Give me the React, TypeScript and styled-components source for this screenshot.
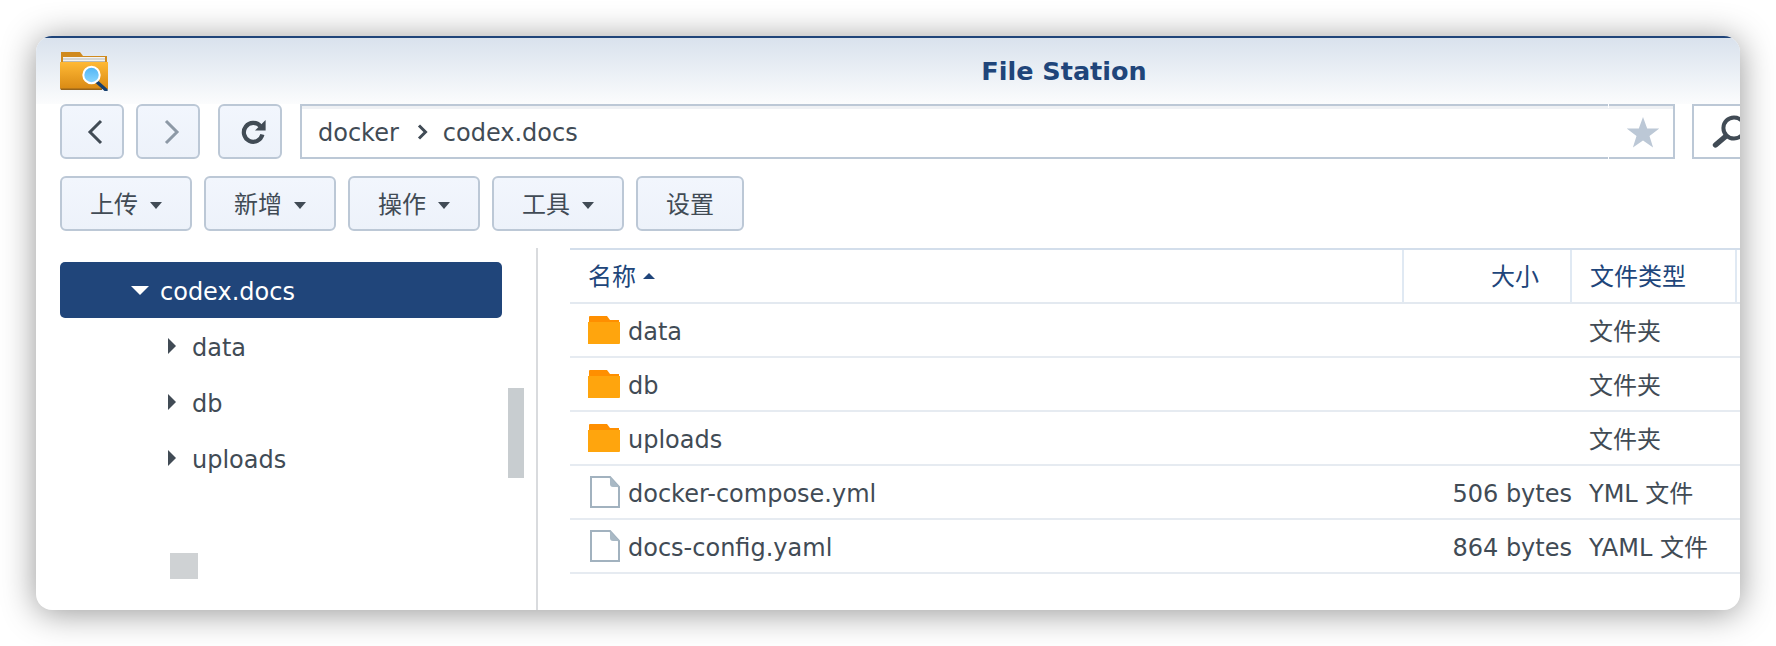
import React from 'react'
import styled, { createGlobalStyle } from 'styled-components'

const FONT = `"DejaVu Sans", "Noto Sans CJK SC", sans-serif`
const INK = '#414b55'
const NAVY = '#20457a'
const EDGE = '#bcc8d6'

const Global = createGlobalStyle`
    html, body {
        margin: 0;
        background: #ffffff;
        overflow: hidden;
    }
    body {
        font-family: ${FONT};
        color: ${INK};
    }
`
const Page = styled.div`
    width: 1776px;
    height: 646px;
    padding: 36px 36px 0;
    box-sizing: border-box;
`
const Window = styled.div`
    width: 1704px;
    height: 574px;
    border-radius: 16px;
    overflow: hidden;
    background: #ffffff;
    box-shadow: 0 3px 34px rgba(0, 0, 0, 0.42);
`
const Inner = styled.div`
    width: 2056px;
    height: 100%;
    display: flex;
    flex-direction: column;
`
const TitleBar = styled.header`
    border-top: 2px solid #1f4479;
    background: linear-gradient(#d9e2ed, #fbfcfd);
    display: grid;
    grid-template-columns: 1fr auto 1fr;
    padding: 13px 24px 0;
    height: 53px;
`
const Title = styled.h1`
    margin: 4px 0 0;
    font-size: 25.5px;
    line-height: 32px;
    font-weight: 700;
    color: #20457a;
`
const Toolbar = styled.div<{ $top?: number }>`
    display: flex;
    height: 55px;
    padding-left: 24px;
    margin-top: ${p => p.$top ?? 0}px;
    gap: 12px;
`
const ToolButton = styled.button<{ $after?: number; $w?: number; $shift?: number }>`
    flex: none;
    height: 55px;
    width: ${p => (p.$w ? `${p.$w}px` : 'auto')};
    margin-right: ${p => p.$after ?? 0}px;
    padding: 0 0 0 ${p => p.$shift ?? 0}px;
    border: 2px solid ${EDGE};
    border-radius: 6px;
    background: linear-gradient(#f2f6fd, #edf2fa);
    display: flex;
    align-items: center;
    justify-content: center;
    gap: 12px;
    font: 400 24px ${FONT};
    color: ${INK};
`
const ButtonLabel = styled.span`
    padding-bottom: 3px;
`
const Caret = styled.span<{ $color?: string }>`
    width: 0;
    height: 0;
    border-left: 6px solid transparent;
    border-right: 6px solid transparent;
    border-top: 7px solid ${p => p.$color ?? INK};
    margin-top: 4px;
`
const Address = styled.div`
    flex: none;
    width: 1375px;
    height: 55px;
    margin-right: 5px;
    box-sizing: border-box;
    border: 2px solid ${EDGE};
    box-shadow: inset 0 3px 0 #eff1f4;
    background: #ffffff;
    display: flex;
    align-items: center;
    padding-left: 16px;
    font-size: 24px;
    position: relative;
`
const Crumb = styled.span`
    line-height: 32px;
    padding-top: 3px;
`
const CrumbArrow = styled.svg`
    margin: 0 14px 0 18px;
    flex: none;
`
const StarSlot = styled.div`
    margin-left: auto;
    width: 64px;
    height: 100%;
    display: flex;
    align-items: center;
    justify-content: center;
    padding-left: 4px;
    box-sizing: border-box;
    &::before {
        content: '';
        position: absolute;
        top: -2px;
        bottom: -2px;
        right: 64px;
        width: 1px;
        background: linear-gradient(#fff 0 4px, transparent 4px calc(100% - 4px), #fff calc(100% - 4px));
    }
`
const SearchBox = styled.div`
    flex: none;
    width: 90px;
    height: 55px;
    box-sizing: border-box;
    border: 2px solid ${EDGE};
    display: flex;
    align-items: center;
    padding-left: 16px;
`
const Body = styled.div`
    flex: 1;
    display: flex;
    margin-top: 17px;
    min-height: 0;
`
const Sidebar = styled.aside`
    flex: none;
    width: 502px;
    box-sizing: border-box;
    padding: 14px 0 0 24px;
    border-right: 2px solid #d9dbde;
    position: relative;
`
const TreeRow = styled.div<{ $active?: boolean; $indent: number }>`
    width: 442px;
    height: 56px;
    box-sizing: border-box;
    padding-left: ${p => p.$indent}px;
    display: flex;
    align-items: center;
    gap: ${p => (p.$active ? 11 : 16)}px;
    font-size: 24px;
    border-radius: 5px;
    background: ${p => (p.$active ? NAVY : 'transparent')};
    color: ${p => (p.$active ? '#ffffff' : INK)};
`
const TreeLabel = styled.span`
    padding-top: 3px;
`
const ArrowRight = styled.span`
    width: 0;
    height: 0;
    border-top: 8px solid transparent;
    border-bottom: 8px solid transparent;
    border-left: 8px solid ${INK};
`
const ArrowDown = styled.span`
    width: 0;
    height: 0;
    border-left: 9px solid transparent;
    border-right: 9px solid transparent;
    border-top: 9px solid #ffffff;
`
const ScrollThumb = styled.div`
    position: absolute;
    left: 472px;
    top: 140px;
    width: 16px;
    height: 90px;
    background: #c8cdd0;
`
const StraySquare = styled.div`
    width: 28px;
    height: 26px;
    margin: 67px 0 0 110px;
    background: #cfd2d4;
`
const Main = styled.main`
    flex: 1;
    padding-left: 32px;
`
const Table = styled.div`
    border-top: 2px solid #d3deeb;
`
const Row = styled.div<{ $head?: boolean }>`
    display: grid;
    grid-template-columns: 834px 168px 165px 1fr;
    height: 54px;
    box-sizing: border-box;
    border-bottom: 2px solid ${p => (p.$head ? '#e3e9f0' : '#e6ebf1')};
    font-size: 24px;
    color: ${p => (p.$head ? '#20457a' : INK)};
`
const HeadCell = styled.div<{ $right?: boolean }>`
    display: flex;
    align-items: center;
    gap: 7px;
    padding: ${p => (p.$right ? '0 31px 3px 0' : '0 0 3px 18px')};
    justify-content: ${p => (p.$right ? 'flex-end' : 'flex-start')};
    border-right: 2px solid #e0e9f3;
    box-sizing: border-box;
`
const SortUp = styled.span`
    width: 0;
    height: 0;
    border-left: 6px solid transparent;
    border-right: 6px solid transparent;
    border-bottom: 6px solid #20457a;
    margin-top: 2px;
`
const NameCell = styled.div`
    display: flex;
    align-items: center;
    padding-left: 18px;
    gap: 8px;
`
const FileName = styled.span`
    padding-top: 4px;
`
const SizeCell = styled.div`
    display: flex;
    align-items: center;
    justify-content: flex-end;
    padding-top: 3px;
`
const TypeCell = styled.div`
    display: flex;
    align-items: center;
    padding: 0 0 2px 17px;
`
const IconSlot = styled.span`
    width: 32px;
    display: flex;
    justify-content: flex-end;
`

const AppIcon = () => (
    <svg width="48" height="40" viewBox="0 0 48 40">
        <defs>
            <linearGradient id="fold" x1="0" y1="0" x2="0" y2="1">
                <stop offset="0" stopColor="#ffb935" />
                <stop offset="1" stopColor="#d98a14" />
            </linearGradient>
            <linearGradient id="lens" x1="0" y1="0" x2="0" y2="1">
                <stop offset="0" stopColor="#4fb4f4" />
                <stop offset="1" stopColor="#8bd7ff" />
            </linearGradient>
        </defs>
        <path d="M1 1h19l3 4h24v10H1z" fill="#d08a1e" />
        <path d="M3 6h42v6H3z" fill="#f4f4f2" />
        <path d="M3 8h42M3 10.5h42" stroke="#a9a9a4" strokeWidth="0.8" />
        <path d="M0 11h48v27H1a1 1 0 0 1-1-1z" fill="url(#fold)" />
        <path d="M0 37.5h42v1.5H1z" fill="#96651d" />
        <path d="M37 31l9 8" stroke="#16406f" strokeWidth="3.4" strokeLinecap="round" />
        <circle cx="31.5" cy="24" r="8.2" fill="url(#lens)" stroke="#ffffff" strokeWidth="2" />
    </svg>
)

const Chevron = ({ dir, color }: { dir: 'left' | 'right'; color: string }) => (
    <svg width="18" height="26" viewBox="0 0 18 26">
        <path
            d={dir === 'left' ? 'M15 2L4 13l11 11' : 'M3 2l11 11L3 24'}
            fill="none"
            stroke={color}
            strokeWidth="3"
        />
    </svg>
)

const RefreshIcon = () => (
    <svg width="26" height="26" viewBox="0 0 26 26">
        <path
            d="M19.4 7.2A9.4 9.4 0 1 0 21.4 15.6"
            fill="none"
            stroke={INK}
            strokeWidth="4.2"
        />
        <path d="M24.6 1V11.6H14z" fill={INK} />
    </svg>
)

const StarIcon = () => (
    <svg width="34" height="32" viewBox="0 0 34 32">
        <path d="M17 1l4.2 11.6H33.3l-9.8 7.3 3.6 11.6L17 24.6 6.9 31.5l3.6-11.6L.7 12.6h12.1z" fill={EDGE} />
    </svg>
)

const SearchIcon = () => (
    <svg width="44" height="36" viewBox="0 0 44 36">
        <circle cx="24" cy="14" r="10.6" fill="none" stroke={INK} strokeWidth="4" />
        <path d="M15.5 22.5L5.5 31" stroke={INK} strokeWidth="5.4" strokeLinecap="round" />
    </svg>
)

const FolderIcon = () => (
    <svg width="32" height="28" viewBox="0 0 32 28">
        <path d="M2 0h17l3 4h9v4H1V1a1 1 0 0 1 1-1z" fill="#ff8f00" />
        <path d="M0 6h32v21a1 1 0 0 1-1 1H0z" fill="#ffa50d" />
    </svg>
)

const FileIcon = () => (
    <svg width="30" height="32" viewBox="0 0 30 32">
        <path d="M1 1h19l9 10v20H1z" fill="#ffffff" stroke="#a2b2bf" strokeWidth="2" />
        <path d="M20 1l9 10h-6a3 3 0 0 1-3-3z" fill="#a9b9c5" />
    </svg>
)

const files = [
    { name: 'data', kind: 'folder', size: '', type: '文件夹' },
    { name: 'db', kind: 'folder', size: '', type: '文件夹' },
    { name: 'uploads', kind: 'folder', size: '', type: '文件夹' },
    { name: 'docker-compose.yml', kind: 'file', size: '506 bytes', type: 'YML 文件' },
    { name: 'docs-config.yaml', kind: 'file', size: '864 bytes', type: 'YAML 文件' },
]

const App = () => (
    <Page>
        <Global />
        <Window>
            <Inner>
                <TitleBar>
                    <AppIcon />
                    <Title>File Station</Title>
                </TitleBar>
                <Toolbar>
                    <ToolButton $w={64} $shift={6}><Chevron dir="left" color={INK} /></ToolButton>
                    <ToolButton $w={64} $shift={8} $after={6}><Chevron dir="right" color="#8d99a6" /></ToolButton>
                    <ToolButton $w={64} $shift={8} $after={6}><RefreshIcon /></ToolButton>
                    <Address>
                        <Crumb>docker</Crumb>
                        <CrumbArrow width="12" height="18" viewBox="0 0 12 18">
                            <path d="M2 2.5l6.5 6.5L2 15.5" fill="none" stroke={INK} strokeWidth="3" />
                        </CrumbArrow>
                        <Crumb>codex.docs</Crumb>
                        <StarSlot><StarIcon /></StarSlot>
                    </Address>
                    <SearchBox><SearchIcon /></SearchBox>
                </Toolbar>
                <Toolbar $top={17}>
                    {['上传', '新增', '操作', '工具'].map(label => (
                        <ToolButton key={label} $w={132}>
                            <ButtonLabel>{label}</ButtonLabel>
                            <Caret />
                        </ToolButton>
                    ))}
                    <ToolButton $w={108}><ButtonLabel>设置</ButtonLabel></ToolButton>
                </Toolbar>
                <Body>
                    <Sidebar>
                        <TreeRow $active $indent={71}>
                            <ArrowDown />
                            <TreeLabel>codex.docs</TreeLabel>
                        </TreeRow>
                        <TreeRow $indent={108}><ArrowRight /><TreeLabel>data</TreeLabel></TreeRow>
                        <TreeRow $indent={108}><ArrowRight /><TreeLabel>db</TreeLabel></TreeRow>
                        <TreeRow $indent={108}><ArrowRight /><TreeLabel>uploads</TreeLabel></TreeRow>
                        <StraySquare />
                        <ScrollThumb />
                    </Sidebar>
                    <Main>
                        <Table>
                            <Row $head>
                                <HeadCell>名称<SortUp /></HeadCell>
                                <HeadCell $right>大小</HeadCell>
                                <HeadCell>文件类型</HeadCell>
                                <div />
                            </Row>
                            {files.map(f => (
                                <Row key={f.name}>
                                    <NameCell>
                                        <IconSlot>{f.kind === 'folder' ? <FolderIcon /> : <FileIcon />}</IconSlot>
                                        <FileName>{f.name}</FileName>
                                    </NameCell>
                                    <SizeCell>{f.size}</SizeCell>
                                    <TypeCell>{f.type}</TypeCell>
                                    <div />
                                </Row>
                            ))}
                        </Table>
                    </Main>
                </Body>
            </Inner>
        </Window>
    </Page>
)

export default App
